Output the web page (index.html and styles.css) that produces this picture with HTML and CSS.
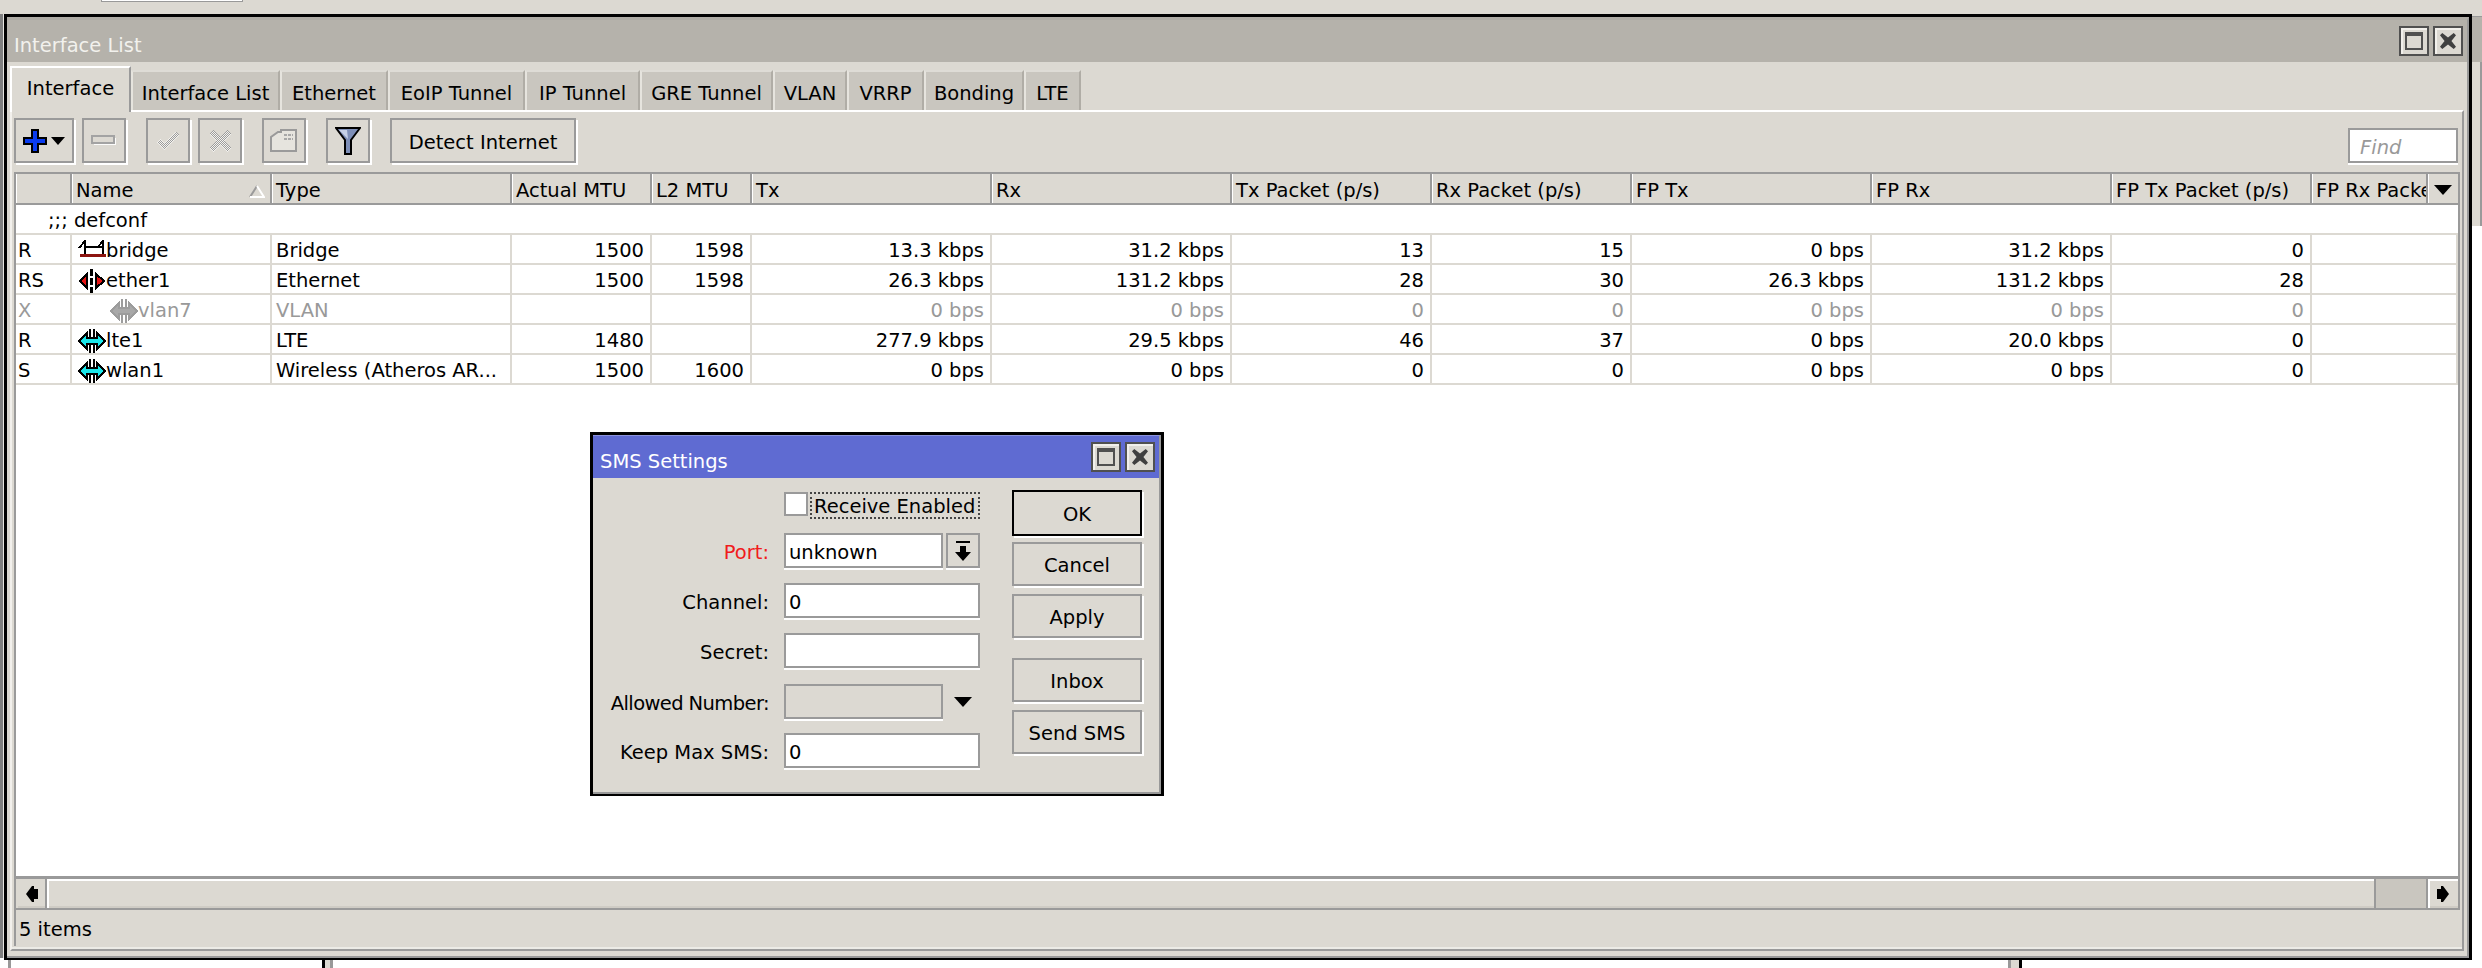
FILE: index.html
```html
<!DOCTYPE html>
<html lang="en">
<head>
<meta charset="utf-8">
<title>Interface List</title>
<link rel="stylesheet" href="styles.css">
</head>
<body>
<svg class="defs" width="0" height="0" aria-hidden="true">
  <defs>
    <pattern id="dither" width="2" height="2" patternUnits="userSpaceOnUse">
      <rect width="2" height="2" fill="#f4f3ef"/>
      <rect width="1" height="1" fill="#9c9c9c"/>
      <rect x="1" y="1" width="1" height="1" fill="#9c9c9c"/>
    </pattern>
    <symbol id="i-max" viewBox="0 0 18 18"><path d="M0 0H18V18H0Z M2 4V16H16V4Z" fill-rule="evenodd"/></symbol>
    <symbol id="i-close" viewBox="0 0 14 14"><path d="M0 2L2 0L7 4L12 0L14 2L10 7L14 12L12 14L7 10L2 14L0 12L4 7Z"/></symbol>
    <symbol id="i-iface" viewBox="0 0 28 24">
      <path class="arrow" d="M1 12L9 4V9H19V4L27 12L19 20V15H9V20Z"/>
      <path class="bars" d="M11 0H13V9H11ZM15 0H17V9H15ZM11 15H13V24H11ZM15 15H17V24H15Z"/>
    </symbol>
  </defs>
</svg>
<div class="desk">
  <div class="behind top-stub"></div>
  <div class="behind left-edge"></div>
  <div class="behind bottom-band"><span class="pillar pillar-a"></span><span class="pillar pillar-b"></span><span class="pillar pillar-c"></span></div>
  <div class="behind right-edge"><div class="right-title"></div><div class="right-body"></div></div>

  <section class="window main-window">
    <div class="frame">
      <header class="titlebar inactive">
        <span class="title-text">Interface List</span>
        <span class="win-btn"><svg class="ico-max"><use href="#i-max"/></svg></span>
        <span class="win-btn"><svg class="ico-close"><use href="#i-close"/></svg></span>
      </header>
      <div class="main-body">
        <nav class="tabs">
          <span class="tab active t1">Interface</span>
          <span class="tab t2">Interface List</span>
          <span class="tab t3">Ethernet</span>
          <span class="tab t4">EoIP Tunnel</span>
          <span class="tab t5">IP Tunnel</span>
          <span class="tab t6">GRE Tunnel</span>
          <span class="tab t7">VLAN</span>
          <span class="tab t8">VRRP</span>
          <span class="tab t9">Bonding</span>
          <span class="tab t10">LTE</span>
        </nav>
        <div class="panel">
          <div class="toolbar">
            <button class="btn tb-add" type="button">
              <svg width="24" height="24" viewBox="0 0 24 24"><path d="M9 1H15V9H23V15H15V23H9V15H1V9H9Z" fill="#0a3cf0" stroke="#000" stroke-width="2" shape-rendering="crispEdges"/></svg>
              <svg class="caret" width="14" height="8" viewBox="0 0 14 8"><path d="M0 0H14L7 8Z"/></svg>
            </button>
            <button class="btn tb-sq" type="button">
              <svg width="26" height="11" viewBox="0 0 26 11"><rect x="3" y="3" width="22" height="7" fill="#fff" opacity=".9"/><rect x="1" y="1" width="22" height="7" fill="#dcd9d2" stroke="#a3a3a3" stroke-width="2" shape-rendering="crispEdges"/></svg>
            </button>
            <button class="btn tb-sq gap-l" type="button">
              <svg width="26" height="24" viewBox="0 0 26 24"><path d="M2 13L5 10L9 14L21 3L24 6L9 21Z" fill="url(#dither)" shape-rendering="crispEdges"/></svg>
            </button>
            <button class="btn tb-sq" type="button">
              <svg width="24" height="24" viewBox="0 0 24 24"><path d="M1 5L5 1L12 8L19 1L23 5L16 12L23 19L19 23L12 16L5 23L1 19L8 12Z" fill="url(#dither)" shape-rendering="crispEdges"/></svg>
            </button>
            <button class="btn tb-sq gap-l" type="button">
              <svg width="28" height="24" viewBox="0 0 28 24"><path d="M1 22V8L8 3H11V1H26V22Z" fill="#e6e4de" stroke="#9a9a9a" stroke-width="2"/><path d="M14 6H23M14 10H23" stroke="#a8a8a8" stroke-width="2" stroke-dasharray="3 1"/></svg>
            </button>
            <button class="btn tb-sq gap-l" type="button">
              <svg width="26" height="28" viewBox="0 0 26 28"><path d="M1 1H25L16 13V27H10V13Z" fill="#7e8fb8" stroke="#000" stroke-width="2"/><path d="M4 3H12L13 12Z" fill="#c6d0e6"/></svg>
            </button>
            <button class="btn tb-text gap-l" type="button">Detect Internet</button>
            <div class="find">Find</div>
          </div>
          <div class="listbox">
            <div class="list">
              <table class="grid">
                <colgroup>
                  <col class="c-flag"><col class="c-200"><col class="c-240"><col class="c-140"><col class="c-100"><col class="c-240"><col class="c-240"><col class="c-200"><col class="c-200"><col class="c-240"><col class="c-240"><col class="c-200"><col class="c-last"><col class="c-menu">
                </colgroup>
                <thead>
                  <tr>
                    <th></th>
                    <th><div class="sorted">Name<svg width="16" height="13" viewBox="0 0 16 13"><path d="M8 1L15 12H1Z" fill="#dcd9d2"/><path d="M8 1L1 12" stroke="#9a9a9a" stroke-width="2" fill="none"/><path d="M8 1L15 12H1" stroke="#fff" stroke-width="2" fill="none"/></svg></div></th>
                    <th>Type</th><th>Actual MTU</th><th>L2 MTU</th><th>Tx</th><th>Rx</th><th>Tx Packet (p/s)</th><th>Rx Packet (p/s)</th><th>FP Tx</th><th>FP Rx</th><th>FP Tx Packet (p/s)</th><th>FP Rx Packet (p/s)</th>
                    <th class="menu-cell"><svg width="18" height="10" viewBox="0 0 18 10"><path d="M0 0H18L9 10Z"/></svg></th>
                  </tr>
                </thead>
                <tbody>
                  <tr><td class="comment" colspan="14">;;; defconf</td></tr>
                  <tr>
                    <td>R</td>
                    <td><div class="nm"><svg class="ico" viewBox="0 0 28 24"><path d="M7 1V15M1 9L7 2M25 1V15M19 9L25 2M7 8H25" fill="none" stroke="#000" stroke-width="2" shape-rendering="crispEdges"/><rect x="2" y="15" width="26" height="3" fill="#8c1410"/></svg>bridge</div></td>
                    <td>Bridge</td><td class="n">1500</td><td class="n">1598</td><td class="n">13.3 kbps</td><td class="n">31.2 kbps</td><td class="n">13</td><td class="n">15</td><td class="n">0 bps</td><td class="n">31.2 kbps</td><td class="n">0</td><td colspan="2"></td>
                  </tr>
                  <tr>
                    <td>RS</td>
                    <td><div class="nm"><svg class="ico" viewBox="0 0 28 24"><path d="M0 12L10 3V21Z M28 12L17 3V21Z" fill="#000"/><path d="M3 12L8 7.5V16.5Z M25 12L19 7.5V16.5Z" fill="#e81414"/><path d="M12 0H15V7H12ZM12 9H15V16H12ZM12 18H15V24H12Z" fill="#000"/></svg>ether1</div></td>
                    <td>Ethernet</td><td class="n">1500</td><td class="n">1598</td><td class="n">26.3 kbps</td><td class="n">131.2 kbps</td><td class="n">28</td><td class="n">30</td><td class="n">26.3 kbps</td><td class="n">131.2 kbps</td><td class="n">28</td><td colspan="2"></td>
                  </tr>
                  <tr class="off">
                    <td>X</td>
                    <td><div class="nm nested"><svg class="ico ico-vlan"><use href="#i-iface"/></svg>vlan7</div></td>
                    <td>VLAN</td><td class="n"></td><td class="n"></td><td class="n">0 bps</td><td class="n">0 bps</td><td class="n">0</td><td class="n">0</td><td class="n">0 bps</td><td class="n">0 bps</td><td class="n">0</td><td colspan="2"></td>
                  </tr>
                  <tr>
                    <td>R</td>
                    <td><div class="nm"><svg class="ico ico-wan"><use href="#i-iface"/></svg>lte1</div></td>
                    <td>LTE</td><td class="n">1480</td><td class="n"></td><td class="n">277.9 kbps</td><td class="n">29.5 kbps</td><td class="n">46</td><td class="n">37</td><td class="n">0 bps</td><td class="n">20.0 kbps</td><td class="n">0</td><td colspan="2"></td>
                  </tr>
                  <tr>
                    <td>S</td>
                    <td><div class="nm"><svg class="ico ico-wan"><use href="#i-iface"/></svg>wlan1</div></td>
                    <td>Wireless (Atheros AR...</td><td class="n">1500</td><td class="n">1600</td><td class="n">0 bps</td><td class="n">0 bps</td><td class="n">0</td><td class="n">0</td><td class="n">0 bps</td><td class="n">0 bps</td><td class="n">0</td><td colspan="2"></td>
                  </tr>
                </tbody>
              </table>
            </div>
            <div class="hscroll">
              <span class="sb-btn"><svg width="12" height="16" viewBox="0 0 12 16"><path d="M0 8L6 0H8V3H12V13H8V16H6Z"/></svg></span>
              <span class="sb-thumb"></span>
              <span class="sb-track"></span>
              <span class="sb-btn sb-right"><svg width="12" height="16" viewBox="0 0 12 16"><path d="M12 8L6 0H4V3H0V13H4V16H6Z"/></svg></span>
            </div>
            <div class="status">5 items</div>
          </div>
        </div>
      </div>
    </div>
  </section>

  <section class="window sms-window">
    <div class="frame sms-frame">
      <header class="titlebar">
        <span class="title-text">SMS Settings</span>
        <span class="win-btn"><svg class="ico-max"><use href="#i-max"/></svg></span>
        <span class="win-btn"><svg class="ico-close"><use href="#i-close"/></svg></span>
      </header>
      <div class="sms-body">
        <div class="form">
          <span></span>
          <div class="check-row"><span class="checkbox"></span><span class="focus">Receive Enabled</span></div>
          <label class="lbl req">Port:</label>
          <div class="combo"><span class="field short">unknown</span><span class="drop"><svg width="16" height="20" viewBox="0 0 16 20"><path d="M1 0H15V2H1ZM5 5H11V11H16L8 20L0 11H5Z"/></svg></span></div>
          <label class="lbl">Channel:</label>
          <span class="field">0</span>
          <label class="lbl">Secret:</label>
          <span class="field"></span>
          <label class="lbl allowed">Allowed Number:</label>
          <div class="combo allowed"><span class="field short disabled"></span><span class="drop plain"><svg width="18" height="10" viewBox="0 0 18 10"><path d="M0 0H18L9 10Z"/></svg></span></div>
          <label class="lbl">Keep Max SMS:</label>
          <span class="field">0</span>
        </div>
        <div class="actions">
          <button class="btn act default" type="button">OK</button>
          <button class="btn act" type="button">Cancel</button>
          <button class="btn act" type="button">Apply</button>
          <button class="btn act sep" type="button">Inbox</button>
          <button class="btn act" type="button">Send SMS</button>
        </div>
      </div>
    </div>
  </section>
</div>
</body>
</html>
```
FILE: styles.css
```css
* { box-sizing: border-box; }
html, body { margin: 0; padding: 0; }
body {
  width: 2482px;
  height: 968px;
  overflow: hidden;
  background: #dcd9d2;
  color: #000;
  font-family: "DejaVu Sans", "Liberation Sans", sans-serif;
  font-size: 19.5px;
  line-height: 24px;
}
.defs { position: absolute; }
.desk { position: relative; width: 2482px; height: 968px; overflow: hidden; }

/* fragments of other windows behind */
.behind { position: absolute; }
.top-stub { left: 101px; top: 0; width: 142px; height: 2px; background: #fff; border: solid #999; border-width: 0 1px 1px 1px; }
.left-edge { left: 0; top: 14px; width: 4px; height: 946px; background: #7f7f7f; border-right: 1px solid #e8e6e1; }
.bottom-band { left: 0; top: 958px; width: 2482px; height: 10px; background: #fff; }
.pillar { position: absolute; top: 0; height: 10px; }
.pillar-a { left: 8px; width: 3px; background: #999; }
.pillar-b { left: 322px; width: 11px; background: #dcd9d2; border-left: 3px solid #000; border-right: 3px solid #999; }
.pillar-c { left: 2008px; width: 14px; background: #dcd9d2; border-left: 3px solid #999; border-right: 3px solid #000; }
.right-edge { left: 2472px; top: 16px; width: 10px; height: 952px; background: #fff; }
.right-title { height: 46px; background: #b5b2ab; border-top: 1px solid #999; }
.right-body { height: 164px; background: #dcd9d2; border-right: 2px solid #9a9a9a; }

/* windows */
.window { position: absolute; background: #dcd9d2; border: 3px solid #000; }
.main-window { left: 4px; top: 14px; width: 2468px; height: 946px; border-bottom-width: 2px; }
.sms-window { left: 590px; top: 432px; width: 574px; height: 364px; border-bottom-width: 2px; }
.frame { height: 100%; display: flex; flex-direction: column; border: solid #999; border-width: 3px 2px 2px 0; border-top-color: #aeaba4; }
.sms-frame { border-top-color: #8d94dc; border-top-width: 1px; border-left: 0; }

.titlebar { display: flex; align-items: center; gap: 4px; height: 42px; flex: none; padding: 0 4px 0 7px; background: #5f6bd2; color: #fff; }
.titlebar.inactive { background: #b5b2ab; color: #f2f1ed; }
.title-text { flex: 1; padding-top: 9px; }
.win-btn { width: 30px; height: 30px; display: flex; align-items: center; justify-content: center; background: #dcd9d2; border: 2px solid #505050; box-shadow: inset 2px 2px 0 #f2f0ec; }
.ico-max { width: 18px; height: 18px; fill: #505050; }
.ico-close { width: 16px; height: 16px; fill: #404040; }

.main-body { flex: 1; min-height: 0; display: flex; flex-direction: column; padding: 0 3px 5px 3px; }
.tabs { height: 48px; flex: none; display: flex; align-items: flex-end; position: relative; z-index: 1; }
.tab { height: 40px; padding-top: 5px; display: flex; align-items: center; justify-content: center; background: #c9c6bf; border: solid; border-width: 2px 2px 0 2px; border-color: #dedcd6 #b0ada6 transparent #e6e4de; white-space: nowrap; }
.tab.active { height: 46px; margin-bottom: -2px; padding-top: 0; padding-bottom: 2px; background: #dcd9d2; border-color: #fff #9a9a9a transparent #fff; }
.t1 { width: 121px; } .t2 { width: 149px; } .t3 { width: 108px; } .t4 { width: 137px; } .t5 { width: 115px; }
.t6 { width: 133px; } .t7 { width: 74px; } .t8 { width: 77px; } .t9 { width: 100px; } .t10 { width: 57px; }

.panel { flex: 1; min-height: 0; display: flex; flex-direction: column; padding: 6px 2px 3px 2px; border: solid; border-width: 2px; border-color: #fff #9a9a9a #9a9a9a #f2f0ec; box-shadow: inset 0 -2px 0 #ecebe6; }

.btn { font: inherit; color: #000; background: #dcd9d2; border: 2px solid #9a9a9a; box-shadow: 2px 2px 0 #fff; padding: 3px 0 0; margin: 0; display: flex; align-items: center; justify-content: center; }
.toolbar { display: flex; height: 47px; flex: none; margin-bottom: 7px; gap: 8px; }
.toolbar .btn { height: 45px; }
.tb-add { width: 60px; gap: 4px; }
.tb-sq { width: 44px; }
.toolbar .tb-add, .toolbar .tb-sq { padding-top: 0; }
.gap-l { margin-left: 12px; }
.toolbar .tb-text { width: 186px; padding-top: 5px; }
.caret { fill: #000; }
.find { margin-left: auto; margin-right: 2px; align-self: flex-end; width: 110px; height: 35px; padding-left: 10px; line-height: 35px; font-style: italic; color: #999; background: #fff; border: 2px solid #9a9a9a; box-shadow: 0 2px 0 #fff; margin-bottom: 2px; }

.listbox { flex: 1; min-height: 0; display: flex; flex-direction: column; border-left: 2px solid #9a9a9a; }
.list { flex: 1; min-height: 0; background: #fff; overflow: hidden; border-right: 2px solid #9a9a9a; }
.grid { table-layout: fixed; border-collapse: separate; border-spacing: 0; width: 2442px; }
.c-flag { width: 56px; } .c-200 { width: 200px; } .c-240 { width: 240px; } .c-140 { width: 140px; } .c-100 { width: 100px; } .c-last { width: 116px; } .c-menu { width: 30px; }
.grid th { height: 33px; padding: 5px 0 0 4px; font-weight: normal; text-align: left; background: #dcd9d2; border: solid #9a9a9a; border-width: 2px 2px 2px 0; white-space: nowrap; overflow: hidden; box-shadow: inset 1px 0 0 #fff; }
.grid th.menu-cell { border-right: 0; padding: 0; text-align: center; }
.menu-cell svg { display: block; margin: 2px auto 0; }
.sorted { display: flex; align-items: center; justify-content: space-between; padding-right: 5px; }
.grid td { height: 30px; padding: 3px 4px 0; white-space: nowrap; overflow: hidden; border: solid #dcd9d2; border-width: 0 2px 2px 0; }
.grid td.n { text-align: right; padding-right: 6px; }
.grid td:first-child { padding-left: 2px; }
.grid td.comment { padding-left: 32px; border-right: 0; }
.off td { color: #999; }
.nm { display: flex; align-items: center; height: 24px; padding-left: 2px; }
.nm.nested { padding-left: 34px; }
.ico { width: 28px; height: 24px; flex: none; shape-rendering: crispEdges; }
.arrow { fill: var(--icon-fill); stroke: var(--icon-line); stroke-width: 2; }
.bars { fill: var(--icon-line); }
.ico-wan { --icon-fill: #19e6ea; --icon-line: #000; }
.ico-vlan { --icon-fill: #a8a8a8; --icon-line: #9c9c9c; }

.hscroll { height: 34px; flex: none; display: flex; background: #dcd9d2; border: solid #9a9a9a; border-width: 3px 2px 2px 0; }
.sb-btn { width: 27px; flex: none; display: flex; align-items: center; justify-content: center; margin-left: 2px; box-shadow: inset 0 -2px 0 #cfccc5; }
.sb-btn svg { fill: #000; }
.sb-thumb { flex: 1; border-left: 2px solid #9a9a9a; border-right: 2px solid #9a9a9a; box-shadow: inset 2px 2px 0 #fff, inset 0 -2px 0 #cfccc5; }
.sb-track { width: 52px; background: #c9c6bf; border-right: 2px solid #9a9a9a; }
.sb-right { margin-left: 0; width: 30px; box-shadow: inset 2px 2px 0 #fff, inset 0 -2px 0 #cfccc5; }
.status { height: 36px; flex: none; padding-left: 3px; line-height: 40px; }

/* SMS window */
.sms-body { flex: 1; display: flex; align-items: flex-start; }
.form { display: grid; grid-template-columns: 176px 196px; column-gap: 15px; row-gap: 14px; grid-auto-rows: 36px; grid-template-rows: 27px; padding-top: 14px; align-items: center; }
.lbl { text-align: right; line-height: 34px; padding-top: 4px; }
.lbl.req { color: #f01c1c; }
.lbl.allowed { margin-top: 2px; letter-spacing: -0.6px; }
.combo.allowed { margin-top: 2px; }
.check-row { display: flex; align-items: flex-start; gap: 2px; height: 27px; white-space: nowrap; }
.checkbox { width: 24px; height: 24px; background: #fff; border: 2px solid #9a9a9a; flex: none; }
.focus { flex: 1; height: 27px; line-height: 26px; padding-left: 2px; border: 2px dotted #444; }
.combo { display: flex; justify-content: space-between; height: 36px; }
.field { display: block; width: 196px; height: 35px; line-height: 35px; padding-left: 3px; background: #fff; border: 2px solid #9a9a9a; box-shadow: 0 2px 0 #fff; align-self: start; }
.field.short { width: 159px; }
.field.disabled { background: #dcd9d2; }
.drop { width: 34px; height: 35px; display: flex; align-items: center; justify-content: center; border: 2px solid #9a9a9a; box-shadow: 0 2px 0 #fff; background: #dcd9d2; }
.drop.plain { border: 0; box-shadow: none; }
.actions { margin-left: 32px; padding-top: 12px; display: flex; flex-direction: column; gap: 8px; }
.act { width: 130px; height: 44px; }
.act.default { height: 46px; margin-bottom: -2px; border-color: #000; box-shadow: 2px 2px 0 #fff; }
.act.sep { margin-top: 12px; }
```
